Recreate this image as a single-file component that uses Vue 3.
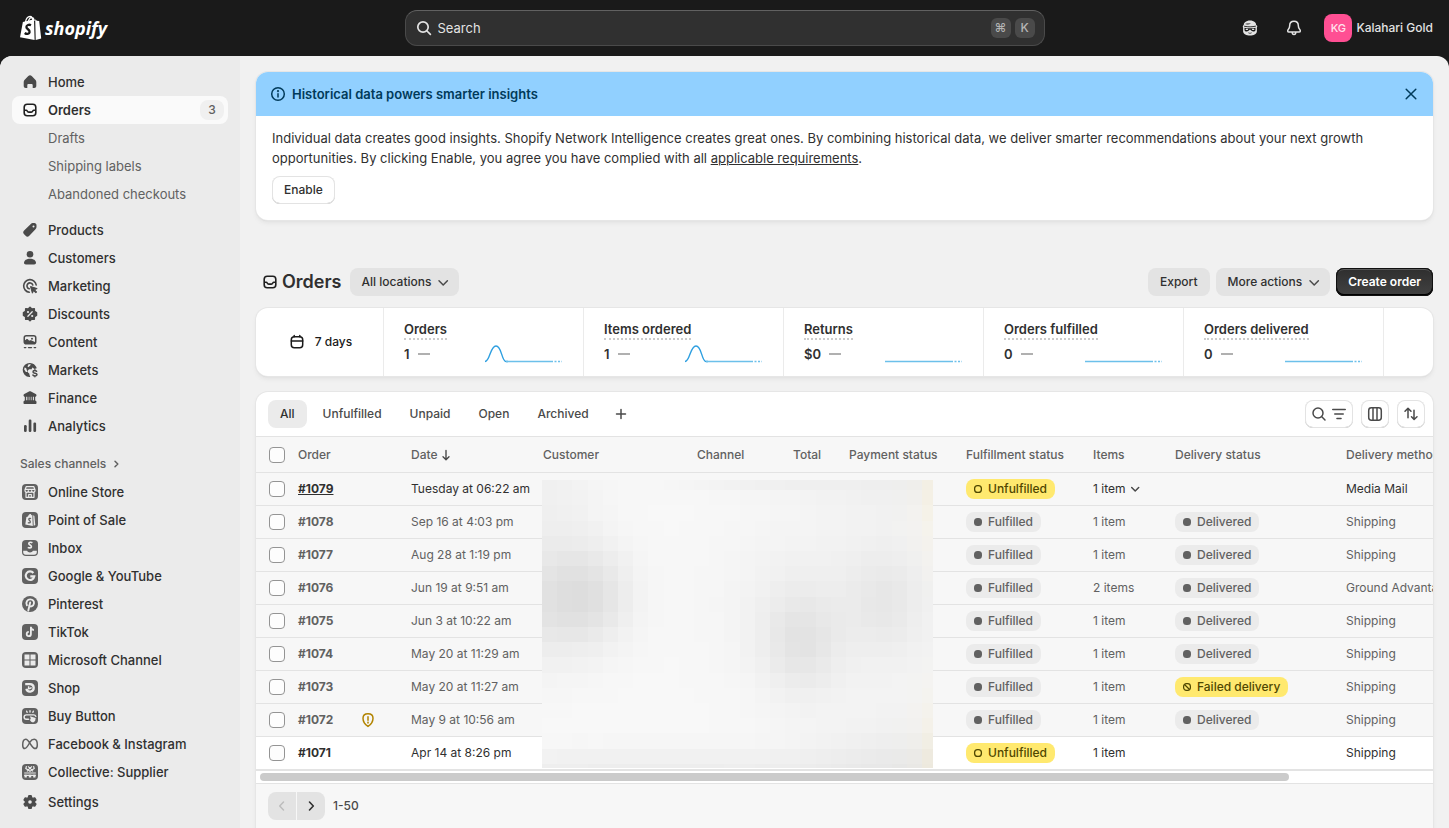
<script setup>
import { ref } from 'vue'

const search = ref('')

const mainNav = [
  { label: 'Products', icon: 'tag' },
  { label: 'Customers', icon: 'person' },
  { label: 'Marketing', icon: 'target' },
  { label: 'Discounts', icon: 'discount' },
  { label: 'Content', icon: 'content' },
  { label: 'Markets', icon: 'markets' },
  { label: 'Finance', icon: 'bank' },
  { label: 'Analytics', icon: 'chart' }
]

const channels = [
  { label: 'Online Store', icon: 'store' },
  { label: 'Point of Sale', icon: 'pos' },
  { label: 'Inbox', icon: 'inbox' },
  { label: 'Google & YouTube', icon: 'google' },
  { label: 'Pinterest', icon: 'pinterest' },
  { label: 'TikTok', icon: 'tiktok' },
  { label: 'Microsoft Channel', icon: 'microsoft' },
  { label: 'Shop', icon: 'shop' },
  { label: 'Buy Button', icon: 'buy' },
  { label: 'Facebook & Instagram', icon: 'meta' },
  { label: 'Collective: Supplier', icon: 'collective' }
]

const box = '<rect x="2" y="2" width="16" height="16" rx="4" fill="#616161"/>'

const icons = {
  home: '<path fill="#4a4a4a" d="M8.3 4.1a2.4 2.4 0 0 1 3.4 0l3.6 3.6c.7.7 1 1.500 1 2.400v3.900c0 1.200-.9 2-2 2h-1.600v-2.800c0-.7-.5-1.200-1.200-1.200h-3c-.7 0-1.200.5-1.200 1.200V16H5.700c-1.100 0-2-.8-2-2v-3.900c0-.9.3-1.700 1-2.400Z"/>',
  orders: '<g fill="none" stroke="#1f1f1f" stroke-width="1.6" stroke-linejoin="round"><rect x="4.200" y="4.200" width="11.600" height="11.600" rx="3"/><path d="M4.200 10.300h1.900c.5 0 .9.300 1.100.7.3.7.9 1.100 1.600 1.100h2.400c.7 0 1.300-.4 1.600-1.100.2-.4.600-.7 1.100-.7h1.900"/></g>',
  tag: '<path fill="#4a4a4a" fill-rule="evenodd" d="M10.800 3.900c.5-.5 1.200-.8 1.900-.8h1.700c1.200 0 2.100 1 2.100 2.100v1.900c0 .7-.3 1.400-.8 1.900l-6.400 6.700a2.600 2.600 0 0 1-3.700 0l-1.500-1.500a2.600 2.600 0 0 1 0-3.700Zm2.700 3.500a1 1 0 1 0 0-2 1 1 0 0 0 0 2Z"/>',
  person: '<g fill="#4a4a4a"><circle cx="10" cy="6.300" r="3.300"/><path d="M4 14.800c0-2.500 2.700-4.100 6-4.100s6 1.600 6 4.100c0 1-.8 1.700-1.800 1.700H5.800c-1 0-1.800-.7-1.800-1.700Z"/></g>',
  target: '<g fill="none" stroke="#4a4a4a" stroke-width="1.6" stroke-linecap="round"><path d="M16.200 9a6.300 6.300 0 1 0-6.900 7.200"/><path d="M12.800 8.900a3 3 0 1 0-3.600 3.900"/></g><path fill="#4a4a4a" stroke="#4a4a4a" stroke-linejoin="round" d="m10.500 10.500 6.700 2.100-2.700 1.100 2.200 2.300-.9.900-2.300-2.200-1.100 2.500Z"/>',
  discount: '<path fill="#4a4a4a" stroke="#4a4a4a" stroke-width="1.500" stroke-linejoin="round" d="m10 3.400 1.800 1.700 2.500-.4.100 2.600 2.100 1.300v2.800L14.400 12.700l-.1 2.600-2.500-.4L10 16.600l-1.800-1.700-2.500.4-.1-2.600-2.100-1.300V8.600l2.100-1.300.1-2.600 2.500.4Z"/><path stroke="#ebebeb" stroke-width="1.300" stroke-linecap="round" d="m7.900 12.200 4.300-4.400"/><g fill="#ebebeb"><circle cx="8" cy="8" r="1.100"/><circle cx="12.200" cy="12" r="1.100"/></g>',
  content: '<path fill="#4a4a4a" fill-rule="evenodd" d="M6.300 3h7.400A2.800 2.800 0 0 1 16.500 5.800v3.900a2.800 2.800 0 0 1-2.800 2.800H6.300a2.800 2.800 0 0 1-2.800-2.800V5.800A2.800 2.800 0 0 1 6.300 3Zm0 1.500c-.8 0-1.300.6-1.300 1.300v2.500l1.100-.9c.6-.5 1.400-.4 1.900.1l1 1.100c.2.200.5.200.7 0 .5-.5 1.300-.5 1.900-.1L15 10V5.800c0-.7-.5-1.300-1.300-1.300Zm5.700 3.300a1 1 0 1 0 0-2 1 1 0 0 0 0 2Z"/><path stroke="#4a4a4a" stroke-width="1.400" stroke-linecap="round" d="M4.400 15.600h1.400M8.500 15.600h3M14.200 15.600h1.400"/>',
  markets: '<path fill="#4a4a4a" d="M10 3a7 7 0 0 0-.6 14c.8.1.9-.5.5-1-.5-.7-.4-1.500-.6-2.200-.2-.8-1.300-1-1.600-1.800-.3-.9.4-1.700 1.100-2.400.6-.6 1.900-.5 2.500-.1l3.100-4.900A7 7 0 0 0 10 3Z"/><path fill="#ebebeb" d="M4.600 7.400c1.300.2 2 1 2 2.100 0 .8.900 1 .8 1.800-.1.700-.8.900-1.500.8L4.200 9.500ZM8.600 4.300l2.200-.1-.7 1.500-1.900 1.600-.7-1Z"/><path fill="#4a4a4a" d="M13.500 4.200c1.700.9 2.800 2.200 3.200 4l-2.200.9-2.200-1.600Z"/><path fill="none" stroke="#4a4a4a" stroke-width="1.500" stroke-linecap="round" d="M16.600 11.300c-.5-.5-1.100-.7-1.900-.7-1 0-1.700.5-1.700 1.300 0 1.800 4 .9 4 2.700 0 .8-.8 1.400-1.900 1.400-.9 0-1.700-.3-2.200-.9M14.900 9.700v.8m0 5.500v.8"/>',
  bank: '<path fill="#4a4a4a" fill-rule="evenodd" d="M9 3.500c.6-.4 1.400-.4 2 0l4.700 2.400c.5.300.8.800.8 1.400 0 .9-.6 1.500-1.300 1.500v3.600c.8.200 1.300.8 1.300 1.600v1.200c0 .5-.4.800-.8.800H4.300c-.4 0-.8-.3-.8-.8V14c0-.8.500-1.400 1.300-1.600V8.800c-.7 0-1.300-.6-1.300-1.500 0-.6.3-1.100.8-1.400ZM6.200 8.800v3.500h1.100V8.800Zm2.500 0v3.500h.7V8.800Zm2.100 0v3.500h.7V8.800Zm2.100 0v3.500h1V8.800Z"/>',
  chart: '<g fill="#4a4a4a"><rect x="4" y="9" width="2.700" height="7" rx="1.200"/><rect x="8.700" y="3.500" width="2.700" height="12.500" rx="1.200"/><rect x="13.400" y="6.500" width="2.700" height="9.500" rx="1.200"/></g>',
  store: box + '<g fill="none" stroke="#ebebeb" stroke-width="1.200" stroke-linejoin="round"><path d="M6.300 4.600h7.400l1.300 3.200v.8a1.600 1.600 0 0 1-3.300.1 1.700 1.700 0 0 1-3.400 0A1.600 1.600 0 0 1 5 8.600v-.8ZM5.400 7.300h9.200M6 10.600v4.700h8v-4.700M8.700 15.200v-2.700h2.600v2.700"/></g>',
  pos: box + '<path fill="#ebebeb" d="m6.400 6.900 1.600-.5C8.400 4.900 9.300 4 10.200 4c.6 0 1 .5 1.200 1.200l.9-.2.500 10.900-7.500-1.300ZM13.200 5.200l1.200.8.9 8.900-1.600.9Z"/><path fill="none" stroke="#616161" stroke-width="1.300" d="M11 8.600c-.9-.6-2.200-.3-2.200.7 0 1.300 1.700 1.300 1.500 2.700-.2 1-1.500 1.100-2.400.4"/>',
  inbox: box + '<path fill="none" stroke="#ebebeb" stroke-width="1.700" d="M12.400 4.700c-1.300-.8-3.600-.6-3.600.9 0 1.600 2.900 1.300 2.600 3.200-.2 1.300-2.300 1.500-3.600.6"/><path fill="#ebebeb" d="M3.200 12.700h3.900c.5 1 1.500 1.700 2.900 1.700s2.400-.7 2.900-1.700h3.900V14a2.700 2.700 0 0 1-2.700 2.700H5.900A2.700 2.700 0 0 1 3.200 14Z"/>',
  google: box + '<path fill="none" stroke="#ebebeb" stroke-width="2.100" d="M13.400 7a4.300 4.300 0 1 0 .9 3.400h-4"/>',
  pinterest: '<circle cx="10" cy="10" r="8" fill="#616161"/><path fill="none" stroke="#ebebeb" stroke-width="1.900" stroke-linecap="round" d="M6.900 11.200C5.300 8.300 7.400 5.400 10.300 5.400c2.600 0 4.100 1.900 3.600 4.200-.5 2.600-3.300 3.700-4.700 1.900M10.200 8.400 8.300 16.500"/>',
  tiktok: box + '<path fill="none" stroke="#ebebeb" stroke-width="1.800" d="M10.900 4.800v7.300a2.100 2.100 0 1 1-2.100-2.200M10.900 5c.2 1.900 1.300 2.900 3 3"/>',
  microsoft: box + '<path fill="#ebebeb" d="M4.500 4.500h5v5h-5ZM10.500 4.500h5v5h-5ZM4.500 10.500h5v5h-5ZM10.500 10.500h5v5h-5Z"/>',
  shop: box + '<path fill="none" stroke="#ebebeb" stroke-width="2.300" d="M5.200 6.200h4.900a3.700 3.700 0 1 1-3.700 4.500"/><path fill="none" stroke="#ebebeb" stroke-width="1.400" d="M8.600 8.200v3.300M9 10.400c1.100.3 2-.1 2.500-1"/>',
  buy: box + '<path fill="none" stroke="#ebebeb" stroke-width="1.400" stroke-linecap="round" d="M8.500 13.300H6.300a2.200 2.200 0 0 1 0-4.400h7.400c1 0 1.800.6 2.100 1.500M6.700 5.200l.4 1.200M10 4.800v1.300M13.300 5.200l-.4 1.200"/><path fill="#ebebeb" d="m10 10.300 5.700 1.600-.6 3.100-2 1.500-1.900-.8-1.700-2.300 1.400-.2Z"/>',
  meta: '<path fill="none" stroke="#616161" stroke-width="1.500" d="M10 9.500C8.500 6.900 7.400 5.300 5.800 5.300c-1.900 0-3.100 2.600-3.100 5.600 0 2.200.7 3.700 2.100 3.700 1.700 0 2.900-2.300 5.200-6.500 1-1.700 2.400-2.800 4.200-2.800 1.900 0 3.100 2.600 3.100 5.600 0 2.200-.8 3.700-2.200 3.700-1.700 0-2.800-2-5.100-5.100Z"/>',
  collective: box + '<g fill="none" stroke="#ebebeb" stroke-width="1.200"><path d="M6.500 4.200 5.800 6.500 10 9.300l4.200-2.800-.7-2.300M8 4.400l4.300 4M12 4.400l-4.300 4M7.400 8.500v1M12.600 8.500v1"/><path d="M4.200 11h11.600M4.200 13.300h11.600"/></g><path fill="#ebebeb" d="M4.500 12.800h2.300v2.700H4.500Zm4.300 0h2.400v2.700H8.800Zm4.400 0h2.300v2.700h-2.300Z"/>',
  settings: '<path fill="#4a4a4a" stroke="#4a4a4a" stroke-width="1.400" stroke-linejoin="round" d="M8.900 3.800h2.200l.6 2 1 .6 2-.5 1.200 2-1.500 1.500v1.200l1.500 1.500-1.200 2-2-.5-1 .6-.6 2H8.900l-.6-2-1-.6-2 .5-1.200-2 1.500-1.500V9.400L4.100 7.900l1.200-2 2 .5 1-.6Z"/><circle cx="10" cy="10" r="1.800" fill="#ebebeb"/>'
}

const metrics = [
  { title: 'Orders', value: '1', peak: true },
  { title: 'Items ordered', value: '1', peak: true },
  { title: 'Returns', value: '$0', peak: false },
  { title: 'Orders fulfilled', value: '0', peak: false },
  { title: 'Orders delivered', value: '0', peak: false }
]

const tabs = ['All', 'Unfulfilled', 'Unpaid', 'Open', 'Archived']

const orders = [
  { id: '#1079', date: 'Tuesday at 06:22 am', status: 'Unfulfilled', items: '1 item', more: true, delivery: '', method: 'Media Mail', state: 'hovered' },
  { id: '#1078', date: 'Sep 16 at 4:03 pm', status: 'Fulfilled', items: '1 item', delivery: 'Delivered', method: 'Shipping', state: 'done' },
  { id: '#1077', date: 'Aug 28 at 1:19 pm', status: 'Fulfilled', items: '1 item', delivery: 'Delivered', method: 'Shipping', state: 'done' },
  { id: '#1076', date: 'Jun 19 at 9:51 am', status: 'Fulfilled', items: '2 items', delivery: 'Delivered', method: 'Ground Advantage', state: 'done' },
  { id: '#1075', date: 'Jun 3 at 10:22 am', status: 'Fulfilled', items: '1 item', delivery: 'Delivered', method: 'Shipping', state: 'done' },
  { id: '#1074', date: 'May 20 at 11:29 am', status: 'Fulfilled', items: '1 item', delivery: 'Delivered', method: 'Shipping', state: 'done' },
  { id: '#1073', date: 'May 20 at 11:27 am', status: 'Fulfilled', items: '1 item', delivery: 'Failed delivery', method: 'Shipping', state: 'done' },
  { id: '#1072', date: 'May 9 at 10:56 am', status: 'Fulfilled', items: '1 item', delivery: 'Delivered', method: 'Shipping', state: 'done', risk: true },
  { id: '#1071', date: 'Apr 14 at 8:26 pm', status: 'Unfulfilled', items: '1 item', delivery: '', method: 'Shipping', state: 'open' }
]

// Redaction mosaic laid over the private customer columns.
const blobs = [
  [46, 116, 30, 36, 22],
  [0, 130, 26, 40, 11],
  [0, 20, 38, 80, 8],
  [258, 162, 27, 36, 16],
  [250, 120, 60, 60, 5],
  [342, 120, 26, 36, 11],
  [370, 110, 80, 130, 5],
  [220, -6, 60, 12, 8],
  [360, 0, 60, 20, 6],
  [370, 290, 70, 35, 10],
  [100, 290, 200, 15, 11]
]
const tiles = []
for (let r = 0; r < 20; r++) {
  for (let c = 0; c < 26; c++) {
    const x = Math.round(c * 15.2)
    const y = Math.round(r * 15.2 - 5)
    const cx = x + 7
    const cy = y + 7
    let v = 248
    for (const [bx, by, sx, sy, amount] of blobs) {
      v -= amount * Math.exp(-(((cx - bx) / sx) ** 2 + ((cy - by) / sy) ** 2) / 2)
    }
    v = Math.round(v)
    const edge = Math.abs(Math.cos((cy / 288) * Math.PI)) ** 3
    const warm = Math.round(16 * Math.exp(-((391 - cx) / 12)) * edge)
    tiles.push({ x, y, fill: `rgb(${v + Math.round(warm / 3)}, ${v}, ${v - warm})` })
  }
}
</script>

<template>
  <div class="shell">
    <header class="topbar">
      <a class="logo" href="#" aria-label="Shopify">
        <svg width="22" height="26" viewBox="0 0 22 26" aria-hidden="true">
          <path fill="none" stroke="#fff" stroke-width="1.300" d="M5.300 7.500C6 3.900 8 1.500 10 1.500s2.900 2.200 3 5M8.300 6.500c.7-2.600 2.100-4.200 4-3.900 1.200.2 1.700 1.700 1.900 3.300" />
          <path fill="#fff" d="M2.900 7 14 4.200l.6 20.800L0 22.300Z" />
          <path fill="#fff" d="m15.200 4.300 1.700 1.500 2.300.3 2 17.300-5.500 1.500Z" />
          <path fill="none" stroke="#1a1a1a" stroke-width="2.300" d="M11 10.200c-1.900-.9-4.600-.3-4.600 1.800 0 2.300 3.500 2.400 3.200 5-.3 2.300-2.900 2.500-4.900 1" />
        </svg>
        <span class="wordmark">shopify</span>
      </a>
      <label class="search">
        <svg width="20" height="20" viewBox="0 0 20 20" fill="none" stroke="#e3e3e3" stroke-width="1.700" stroke-linecap="round" aria-hidden="true"><circle cx="9" cy="9" r="5.200" /><path d="m13 13 3.400 3.400" /></svg>
        <input v-model="search" type="text" placeholder="Search" aria-label="Search">
        <kbd>⌘</kbd><kbd>K</kbd>
      </label>
      <div class="account">
        <button class="round" aria-label="Sidekick">
          <svg width="20" height="20" viewBox="0 0 20 20" aria-hidden="true">
            <path fill="#e3e3e3" fill-rule="evenodd" d="M5 4.300c2.600-2.500 7.400-2.500 10 0 .9.900 1.100 1.700 1.100 2.700 1.300.4 1.500 1.700.8 2.600v3.900c-.4 2.600-3.200 4-6.900 4s-6.500-1.400-6.900-4V9.600C2.500 8.700 2.800 7.500 3.800 7c0-1 .2-1.800 1.200-2.700ZM5 6.100c1.500.6 4.300.5 6-.5-1.500 0-4.100-.2-6 .5ZM4.500 9.700v2.500c.5 1.500 2.800 1.700 4 .5L10 11.600l1.500 1.100c1.200 1.200 3.500 1 4-.5V9.700c-1.800.5-3.600.6-5.500.600s-3.700-.1-5.500-.6ZM8.300 14.200l1.700.9 1.700-.9-.5 1.300H8.800Z" />
            <path fill="none" stroke="#e3e3e3" stroke-width="1.300" stroke-linecap="round" d="M6.200 11.300h1.300M12.500 11.300h1.300" />
            <path fill="none" stroke="#1a1a1a" stroke-width=".9" stroke-linecap="round" d="M4.500 8.300c3.700.8 7.600.7 11-.1" />
          </svg>
        </button>
        <button class="round" aria-label="Notifications">
          <svg width="20" height="20" viewBox="0 0 20 20" fill="none" stroke="#e3e3e3" stroke-width="1.500" stroke-linecap="round" stroke-linejoin="round" aria-hidden="true"><path d="M10 3.300c-2.500 0-4.300 1.800-4.300 4.300 0 1.600-.4 2.700-1.300 3.700-1.100 1.200-1 2.800.6 2.800h10c1.600 0 1.700-1.600.6-2.800-.9-1-1.300-2.100-1.300-3.700 0-2.500-1.800-4.300-4.300-4.300ZM8.200 14.300c0 3 3.600 3 3.600 0" /></svg>
        </button>
        <button class="user"><span class="avatar">KG</span>Kalahari Gold</button>
      </div>
    </header>

    <div class="frame">
      <nav class="sidebar" aria-label="Main">
        <a class="item" href="#"><svg width="20" height="20" viewBox="0 0 20 20" aria-hidden="true" v-html="icons.home" />Home</a>
        <a class="item active" href="#"><svg width="20" height="20" viewBox="0 0 20 20" aria-hidden="true" v-html="icons.orders" />Orders<span class="count">3</span></a>
        <a class="item sub" href="#">Drafts</a>
        <a class="item sub" href="#">Shipping labels</a>
        <a class="item sub last" href="#">Abandoned checkouts</a>
        <a v-for="n in mainNav" :key="n.label" class="item" href="#"><svg width="20" height="20" viewBox="0 0 20 20" aria-hidden="true" v-html="icons[n.icon]" />{{ n.label }}</a>
        <button class="section">Sales channels
          <svg width="12" height="12" viewBox="0 0 12 12" fill="none" stroke="#616161" stroke-width="1.500" stroke-linecap="round" stroke-linejoin="round" aria-hidden="true"><path d="m5 3.200 2.800 2.800L5 8.800" /></svg>
        </button>
        <a v-for="n in channels" :key="n.label" class="item" href="#"><svg width="20" height="20" viewBox="0 0 20 20" aria-hidden="true" v-html="icons[n.icon]" />{{ n.label }}</a>
        <a class="item settings" href="#"><svg width="20" height="20" viewBox="0 0 20 20" aria-hidden="true" v-html="icons.settings" />Settings</a>
      </nav>

      <main class="main">
        <section class="card banner">
          <div class="banner-head">
            <svg width="20" height="20" viewBox="0 0 20 20" fill="none" stroke="#003a5a" stroke-width="1.500" stroke-linecap="round" aria-hidden="true"><circle cx="10" cy="10" r="6.300" /><path d="M10 9.700v3.300" /><circle cx="10" cy="7.200" r=".4" /></svg>
            <h2>Historical data powers smarter insights</h2>
            <button class="close" aria-label="Dismiss">
              <svg width="20" height="20" viewBox="0 0 20 20" fill="none" stroke="#003a5a" stroke-width="1.500" stroke-linecap="round" aria-hidden="true"><path d="m5.200 5.200 9.600 9.600M14.800 5.200l-9.600 9.600" /></svg>
            </button>
          </div>
          <div class="banner-body">
            <p>Individual data creates good insights. Shopify Network Intelligence creates great ones. By combining historical data, we deliver smarter recommendations about your next growth opportunities. By clicking Enable, you agree you have complied with all <a href="#">applicable requirements</a>.</p>
            <button class="btn outlined">Enable</button>
          </div>
        </section>

        <div class="title-row">
          <svg width="20" height="20" viewBox="0 0 20 20" aria-hidden="true" v-html="icons.orders" />
          <h1>Orders</h1>
          <button class="btn grey drop">All locations
            <svg width="20" height="20" viewBox="0 0 20 20" fill="none" stroke="#4a4a4a" stroke-width="1.500" stroke-linecap="round" stroke-linejoin="round" aria-hidden="true"><path d="m6 8.800 4.200 4.200 4.200-4.200" /></svg>
          </button>
          <div class="actions">
            <button class="btn grey">Export</button>
            <button class="btn grey drop">More actions
              <svg width="20" height="20" viewBox="0 0 20 20" fill="none" stroke="#4a4a4a" stroke-width="1.500" stroke-linecap="round" stroke-linejoin="round" aria-hidden="true"><path d="m6 8.800 4.200 4.200 4.200-4.200" /></svg>
            </button>
            <button class="btn primary">Create order</button>
          </div>
        </div>

        <section class="card metrics">
          <button class="range">
            <svg width="20" height="20" viewBox="0 0 20 20" fill="none" stroke="#1a1a1a" stroke-width="1.500" stroke-linecap="round" aria-hidden="true"><rect x="4.300" y="4.800" width="11.400" height="11" rx="3" /><path d="M4.300 9h11.400M7.200 3.400v1.400M12.800 3.400v1.400" /></svg>
            7 days
          </button>
          <div v-for="m in metrics" :key="m.title" class="metric">
            <h3>{{ m.title }}</h3>
            <div class="value">{{ m.value }}<i></i></div>
            <svg class="spark" width="78" height="20" viewBox="0 0 78 20" fill="none" aria-hidden="true">
              <path v-if="m.peak" stroke="#2e9fe0" stroke-width="1.400" d="M1 17.500c5 0 5-15.500 11-15.500s5.500 15.500 10 15.500h2" />
              <path stroke="#6cc0ea" stroke-width="1.600" :d="m.peak ? 'M22 17.500h45' : 'M1 17.500h66'" />
              <path stroke="#6cc0ea" stroke-width="1.400" stroke-dasharray="2 1.500" d="M67 17.500h11" />
            </svg>
          </div>
        </section>

        <section class="card list">
          <div class="toolbar">
            <button v-for="(t, i) in tabs" :key="t" class="tab" :class="{ on: i === 0 }">{{ t }}</button>
            <button class="add" aria-label="Create new view">
              <svg width="20" height="20" viewBox="0 0 20 20" fill="none" stroke="#4a4a4a" stroke-width="1.500" stroke-linecap="round" aria-hidden="true"><path d="M10 5.500v9M5.500 10h9" /></svg>
            </button>
            <div class="tools">
              <button class="btn outlined tool" aria-label="Search and filter">
                <svg width="20" height="20" viewBox="0 0 20 20" fill="none" stroke="#4a4a4a" stroke-width="1.500" stroke-linecap="round" aria-hidden="true"><circle cx="9" cy="9" r="5" /><path d="m12.800 12.800 3.200 3.200" /></svg>
                <svg width="20" height="20" viewBox="0 0 20 20" fill="none" stroke="#4a4a4a" stroke-width="1.600" stroke-linecap="round" aria-hidden="true"><path d="M3.800 5.500h12.400M5.800 10h8.400M8 14.500h4" /></svg>
              </button>
              <button class="btn outlined tool" aria-label="Edit columns">
                <svg width="20" height="20" viewBox="0 0 20 20" fill="none" stroke="#4a4a4a" stroke-width="1.500" aria-hidden="true"><rect x="3.700" y="3.700" width="12.600" height="12.600" rx="2.700" /><path d="M8 3.700v12.600M12 3.700v12.600" /></svg>
              </button>
              <button class="btn outlined tool" aria-label="Sort">
                <svg width="20" height="20" viewBox="0 0 20 20" fill="none" stroke="#4a4a4a" stroke-width="1.500" stroke-linecap="round" stroke-linejoin="round" aria-hidden="true"><path d="M7 13.700V4.500M4 7.300l3-3 3 3M13 6.300v9.200M10.500 12.800l2.600 2.700 2.900-2.700" /></svg>
              </button>
            </div>
          </div>

          <div class="table-wrap">
            <table>
              <colgroup>
                <col class="c-check"><col class="c-order"><col class="c-date"><col class="c-customer"><col class="c-channel"><col class="c-total"><col class="c-payment"><col class="c-fulfil"><col class="c-items"><col class="c-delivery"><col class="c-method">
              </colgroup>
              <thead>
                <tr>
                  <th class="check"><input type="checkbox" aria-label="Select all orders"></th>
                  <th>Order</th>
                  <th><span class="sorted">Date<svg width="14" height="14" viewBox="0 0 14 14" fill="none" stroke="#4a4a4a" stroke-width="1.400" stroke-linecap="round" stroke-linejoin="round" aria-hidden="true"><path d="M7 2.500v9M4 8.700l3 3 3-3" /></svg></span></th>
                  <th>Customer</th>
                  <th>Channel</th>
                  <th>Total</th>
                  <th>Payment status</th>
                  <th>Fulfillment status</th>
                  <th>Items</th>
                  <th>Delivery status</th>
                  <th>Delivery method</th>
                </tr>
              </thead>
              <tbody>
                <tr v-for="o in orders" :key="o.id" :class="o.state">
                  <td class="check"><input type="checkbox" :aria-label="'Select order ' + o.id"></td>
                  <td>
                    <div class="order-cell">
                      <a href="#">{{ o.id }}</a>
                      <svg v-if="o.risk" width="20" height="20" viewBox="0 0 20 20" fill="none" stroke="#b28400" stroke-width="1.500" stroke-linecap="round" stroke-linejoin="round" aria-label="Risk"><path d="M10 3.800c3 0 5 1.600 5 4.400 0 3.600-2.300 6.500-5 8.200-2.700-1.700-5-4.600-5-8.200 0-2.800 2-4.400 5-4.400ZM10 6.800v3.500" /><circle cx="10" cy="12.600" r=".3" /></svg>
                    </div>
                  </td>
                  <td>{{ o.date }}</td>
                  <td></td>
                  <td></td>
                  <td></td>
                  <td></td>
                  <td>
                    <span class="badge" :class="{ warn: o.status === 'Unfulfilled' }">
                      <svg width="20" height="20" viewBox="0 0 20 20" aria-hidden="true">
                        <rect v-if="o.status === 'Fulfilled'" x="6" y="6" width="8" height="8" rx="3.500" fill="#616161" />
                        <rect v-else x="6.600" y="6.600" width="6.800" height="6.800" rx="3" fill="none" stroke="#4f4700" stroke-width="1.300" />
                      </svg>{{ o.status }}
                    </span>
                  </td>
                  <td>
                    <span class="items">{{ o.items }}<svg v-if="o.more" width="20" height="20" viewBox="0 0 20 20" fill="none" stroke="#4a4a4a" stroke-width="1.500" stroke-linecap="round" stroke-linejoin="round" aria-hidden="true"><path d="m6.700 8.500 3.500 3.500 3.500-3.500" /></svg></span>
                  </td>
                  <td>
                    <span v-if="o.delivery" class="badge" :class="{ warn: o.delivery !== 'Delivered' }">
                      <svg width="20" height="20" viewBox="0 0 20 20" aria-hidden="true">
                        <rect v-if="o.delivery === 'Delivered'" x="6" y="6" width="8" height="8" rx="3.500" fill="#616161" />
                        <g v-else fill="none" stroke="#4f4700" stroke-width="1.200"><rect x="6.600" y="6.600" width="6.800" height="6.800" rx="2.800" /><path d="m7.500 7.500 5 5" /></g>
                      </svg>{{ o.delivery }}
                    </span>
                  </td>
                  <td>{{ o.method }}</td>
                </tr>
              </tbody>
            </table>
            <svg class="mosaic" viewBox="0 0 391 288" shape-rendering="crispEdges" aria-hidden="true">
              <rect v-for="t in tiles" :key="t.x + '-' + t.y" :x="t.x" :y="t.y" width="16" height="16" :fill="t.fill" />
            </svg>
          </div>

          <div class="scroll"><div class="thumb"></div></div>
          <footer class="pager">
            <button disabled aria-label="Previous page">
              <svg width="20" height="20" viewBox="0 0 20 20" fill="none" stroke="#bdbdbd" stroke-width="1.500" stroke-linecap="round" stroke-linejoin="round" aria-hidden="true"><path d="M11.500 6 7.700 10l3.800 4" /></svg>
            </button>
            <button aria-label="Next page">
              <svg width="20" height="20" viewBox="0 0 20 20" fill="none" stroke="#303030" stroke-width="1.600" stroke-linecap="round" stroke-linejoin="round" aria-hidden="true"><path d="m8.500 6 3.800 4-3.800 4" /></svg>
            </button>
            <span>1-50</span>
          </footer>
        </section>
      </main>
    </div>
  </div>
</template>

<style>
body {
  background: #1a1a1a;
}
</style>

<style scoped>
.shell {
  display: flex;
  flex-direction: column;
  height: 100vh;
  overflow: hidden;
  background: #1a1a1a;
  color: #303030;
  font-family: Inter, "Liberation Sans", sans-serif;
  font-size: 13px;
  line-height: 20px;
}
.shell *,
.shell *::before {
  box-sizing: border-box;
}
button,
input {
  font: inherit;
  color: inherit;
}
button {
  display: inline-flex;
  align-items: center;
  padding: 0;
  border: 0;
  background: none;
  white-space: nowrap;
  cursor: pointer;
}
svg {
  display: block;
  flex: none;
}
a {
  color: inherit;
  text-decoration: none;
}
h1, h2, h3, p {
  margin: 0;
}

.topbar {
  display: grid;
  grid-template-columns: 1fr minmax(0, 640px) 1fr;
  align-items: center;
  flex: none;
  height: 56px;
  padding: 0 16px;
}
.logo {
  display: flex;
  align-items: center;
  gap: 3px;
  padding-left: 4px;
  color: #fff;
}
.wordmark {
  font: italic 700 18px/24px "Open Sans", sans-serif;
}
.search {
  display: flex;
  align-items: center;
  gap: 4px;
  height: 36px;
  padding: 0 9px 0 8px;
  border: 1px solid #4a4a4a;
  border-top-color: #616161;
  border-radius: 12px;
  background: #303030;
  color: #e3e3e3;
}
.search input {
  flex: 1;
  min-width: 0;
  padding: 0;
  border: 0;
  outline: 0;
  background: none;
}
.search input::placeholder {
  color: #e3e3e3;
  opacity: 1;
}
kbd {
  display: flex;
  align-items: center;
  justify-content: center;
  width: 20px;
  height: 20px;
  border-radius: 6px;
  background: #4a4a4a;
  color: #b5b5b5;
  font: 500 12px/20px Inter, "DejaVu Sans", sans-serif;
}
.account {
  display: flex;
  align-items: center;
  justify-content: flex-end;
  gap: 12px;
}
.round {
  justify-content: center;
  width: 32px;
  height: 32px;
}
.user {
  gap: 4px;
  padding-left: 2px;
  color: #e3e3e3;
  font-size: 12px;
  font-weight: 550;
}
.avatar {
  width: 28px;
  height: 28px;
  border-radius: 8px;
  background: #ff4f93;
  color: #ffe3ee;
  font-size: 11px;
  font-weight: 450;
  line-height: 28px;
  text-align: center;
}

.frame {
  display: flex;
  flex: 1;
  min-height: 0;
  overflow: hidden;
  border-radius: 12px 12px 0 0;
  background: #f1f1f1;
}
.sidebar {
  display: flex;
  flex-direction: column;
  flex: none;
  width: 240px;
  padding: 12px;
  background: #ebebeb;
}
.item {
  display: flex;
  align-items: center;
  flex: none;
  gap: 8px;
  height: 28px;
  padding: 0 4px 0 8px;
  border-radius: 8px;
  font-weight: 550;
}
.item.active {
  background: #fafafa;
  font-weight: 600;
}
.count {
  margin-left: auto;
  width: 24px;
  border-radius: 8px;
  background: #f0f0f0;
  color: #616161;
  font-size: 12px;
  font-weight: 500;
  text-align: center;
}
.item.sub {
  padding-left: 36px;
  color: #616161;
  font-weight: 400;
}
.item.last {
  margin-bottom: 8px;
}
.section {
  flex: none;
  gap: 4px;
  height: 28px;
  margin-top: 10px;
  padding-left: 8px;
  color: #616161;
  font-size: 12px;
  font-weight: 550;
}
.item.settings {
  margin-top: 2px;
}

.main {
  display: flex;
  flex-direction: column;
  flex: 1;
  min-width: 0;
  padding: 16px 16px 0;
}
.card {
  flex: none;
  overflow: hidden;
  border-radius: 12px;
  background: #fff;
  box-shadow: 0 0 0 1px #e6e6e6, 0 1px 1px #cfcfcf, 0 3px 4px #e2e2e2;
}
.banner-head {
  display: flex;
  align-items: center;
  gap: 4px;
  padding: 12px;
  background: #91d0ff;
  color: #003a5a;
}
h2 {
  font-size: 13px;
  font-weight: 600;
}
.close {
  margin-left: auto;
}
.banner-body {
  display: flex;
  flex-direction: column;
  align-items: flex-start;
  gap: 8px;
  padding: 12px 16px 16px;
  font-weight: 400;
}
.banner-body a {
  text-decoration: underline;
}
.btn {
  height: 28px;
  padding: 0 12px;
  border-radius: 8px;
  font-size: 12px;
  font-weight: 550;
}
.outlined {
  background: #fff;
  box-shadow: inset 0 0 0 1px #e3e3e3, inset 0 -1px 0 #b5b5b5;
}
.grey {
  background: #e3e3e3;
}
.drop {
  gap: 2px;
  padding-right: 6px;
}
.primary {
  background: linear-gradient(#2e2e2e, #424242);
  box-shadow: inset 0 0 0 1px #111, inset 0 2px 0 #5a5a5a, inset 0 -1px 0 1px #000;
  color: #fff;
  font-weight: 600;
}
.title-row {
  display: flex;
  align-items: center;
  flex: none;
  margin: 48px 0 12px;
  padding-left: 4px;
  gap: 2px;
}
h1 {
  margin-right: 6px;
  font-size: 18px;
  font-weight: 600;
}
.actions {
  display: flex;
  gap: 6px;
  margin-left: auto;
}

.metrics {
  display: flex;
  height: 68px;
  margin-bottom: 16px;
}
.range {
  justify-content: center;
  gap: 8px;
  width: 128px;
  border-right: 1px solid #ebebeb;
  color: #1a1a1a;
  font-size: 12px;
  font-weight: 500;
}
.metric {
  position: relative;
  flex: 0 0 200px;
  padding: 11px 20px;
  border-right: 1px solid #ebebeb;
}
h3 {
  display: inline-block;
  border-bottom: 2px dotted #cccccc;
  font-size: 13px;
  font-weight: 600;
  line-height: 18px;
}
.value {
  display: flex;
  align-items: center;
  gap: 8px;
  margin-top: 4px;
  font-weight: 600;
}
.value i {
  width: 12px;
  height: 2px;
  background: #b0b0b0;
}
.spark {
  position: absolute;
  right: 21px;
  bottom: 12px;
}

.list {
  display: flex;
  flex-direction: column;
  flex: 1 0 auto;
  border-radius: 12px 12px 0 0;
}
.toolbar {
  display: flex;
  align-items: center;
  gap: 4px;
  padding: 8px 8px 8px 12px;
}
.tab {
  height: 28px;
  padding: 0 12px;
  border-radius: 8px;
  color: #4a4a4a;
  font-size: 12px;
  font-weight: 550;
}
.tab.on {
  background: #ebebeb;
  color: #303030;
}
.add {
  justify-content: center;
  width: 32px;
  height: 28px;
}
.tools {
  display: flex;
  gap: 8px;
  margin-left: auto;
}
.tool {
  padding: 0 4px;
}
.table-wrap {
  position: relative;
  overflow: hidden;
}
table {
  width: 1250px;
  min-width: 100%;
  table-layout: fixed;
  border-collapse: separate;
  border-spacing: 0;
  border-bottom: 1px solid #e3e3e3;
  font-size: 12px;
}
.c-check { width: 42px; }
.c-order { width: 113px; }
.c-date { width: 132px; }
.c-customer { width: 154px; }
.c-channel { width: 96px; }
.c-total { width: 56px; }
.c-payment { width: 117px; }
.c-fulfil { width: 127px; }
.c-items { width: 82px; }
.c-delivery { width: 171px; }
th,
td {
  padding: 0;
  border-bottom: 1px solid #e3e3e3;
  text-align: left;
  white-space: nowrap;
}
th {
  height: 37px;
  border-top: 1px solid #e3e3e3;
  background: #f7f7f7;
  color: #616161;
  font-weight: 550;
}
td {
  height: 33px;
  background: #f7f7f7;
  font-weight: 400;
}
.sorted,
.items {
  display: flex;
  align-items: center;
}
.sorted {
  gap: 1px;
}
.done td {
  color: #616161;
}
.open td {
  background: #fff;
}
.check input {
  display: block;
  appearance: none;
  width: 16px;
  height: 16px;
  margin: 0 0 0 13px;
  border: 1px solid #949494;
  border-radius: 4px;
  background: #fdfdfd;
}
.order-cell {
  display: flex;
  align-items: center;
  gap: 25px;
}
.order-cell a {
  font-weight: 650;
}
.hovered a {
  text-decoration: underline;
}
.badge {
  display: inline-flex;
  align-items: center;
  height: 20px;
  padding: 0 8px 0 2px;
  border-radius: 8px;
  background: #ebebeb;
  color: #616161;
  font-weight: 550;
  vertical-align: middle;
}
.badge.warn {
  background: #ffe96f;
  color: #4f4700;
}
.mosaic {
  position: absolute;
  top: 44px;
  left: 286px;
  width: 391px;
  height: 288px;
}
.scroll {
  padding: 2px 4px;
  border-bottom: 1px solid #e3e3e3;
}
.thumb {
  width: 88%;
  height: 8px;
  border-radius: 4px;
  background: #cbcbcb;
}
.pager {
  display: flex;
  align-items: flex-start;
  flex: 1;
  padding: 8px 12px;
  background: #f7f7f7;
}
.pager button {
  justify-content: center;
  width: 28px;
  height: 28px;
  border-radius: 8px 0 0 8px;
  background: #e3e3e3;
}
.pager button + button {
  margin-left: 1px;
  border-radius: 0 8px 8px 0;
}
.pager span {
  margin-left: 8px;
  color: #4a4a4a;
  font-size: 12px;
  font-weight: 500;
  line-height: 28px;
}
</style>
